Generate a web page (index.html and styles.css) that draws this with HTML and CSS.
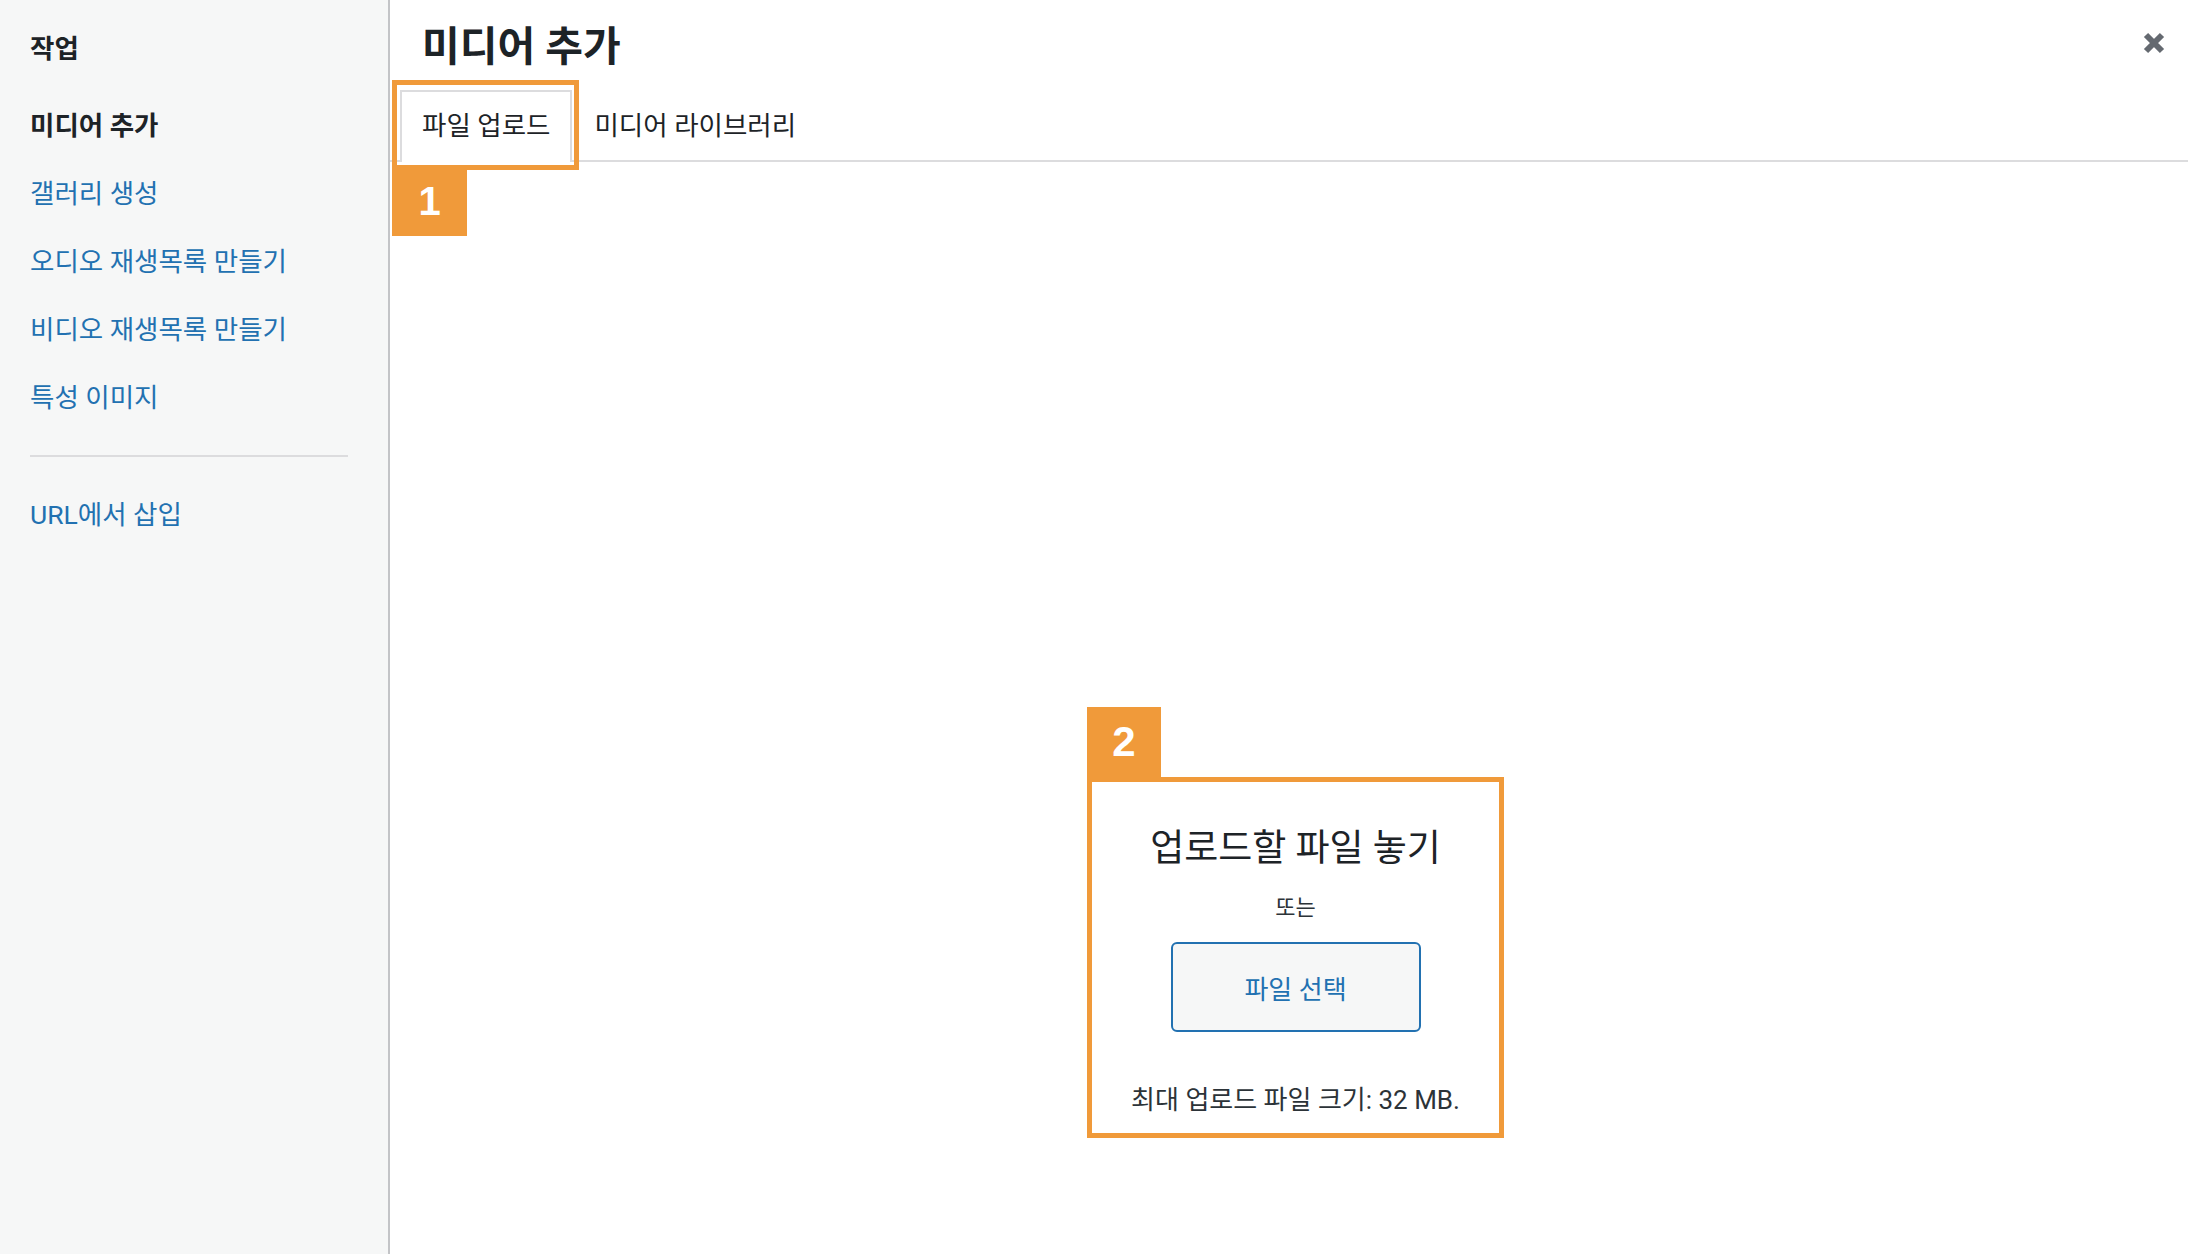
FILE: index.html
```html
<!DOCTYPE html>
<html lang="ko">
<head>
    <meta charset="UTF-8">
    <meta name="viewport" content="width=device-width, initial-scale=1.0">
    <title>미디어 추가</title>
    <link rel="stylesheet" href="styles.css">
</head>
<body>

    <div class="media-modal">

        <!-- Left menu -->
        <aside class="menu">
            <h2 class="menu-heading">작업</h2>
            <a class="menu-item active" href="#">미디어 추가</a>
            <a class="menu-item" href="#">갤러리 생성</a>
            <a class="menu-item" href="#">오디오 재생목록 만들기</a>
            <a class="menu-item" href="#">비디오 재생목록 만들기</a>
            <a class="menu-item" href="#">특성 이미지</a>
            <div class="separator"></div>
            <a class="menu-item" href="#">URL에서 삽입</a>
        </aside>

        <!-- Main frame -->
        <main class="frame">
            <header class="frame-title">
                <h1>미디어 추가</h1>
                <button class="close-btn" aria-label="닫기">
                    <svg width="22" height="22" viewBox="0 0 22 22">
                        <path d="M3 3 L19 19 M19 3 L3 19" stroke="#646970" stroke-width="6" fill="none"/>
                    </svg>
                </button>
            </header>

            <nav class="router">
                <a class="tab active" href="#">파일 업로드
                    <span class="mark-frame"></span>
                    <span class="mark-badge">1</span>
                </a>
                <a class="tab" href="#">미디어 라이브러리</a>
            </nav>

            <section class="uploader">
                <div class="drop-wrap">
                    <div class="mark-tag">2</div>
                    <div class="drop-zone">
                        <h2 class="drop-title">업로드할 파일 놓기</h2>
                        <p class="drop-or">또는</p>
                        <button class="select-btn">파일 선택</button>
                        <p class="max-size">최대 업로드 파일 크기: 32 MB.</p>
                    </div>
                </div>
            </section>
        </main>

    </div>

</body>
</html>
```

FILE: styles.css
```css
/* General */
body {
    margin: 0;
    font-family: Roboto, "Noto Sans CJK KR", sans-serif;
    color: #1d2327;
    background: #fff;
}

.media-modal {
    display: flex;
    height: 100vh;
}

/* Left menu */
.menu {
    width: 358px;
    padding: 15px 0 0 30px;
    background: #f6f7f7;
    border-right: 2px solid #c3c4c7;
}

.menu-heading {
    margin: 0 0 9px;
    font-size: 26.5px;
    line-height: 68px;
    font-weight: 700;
}

.menu-item {
    display: block;
    font-size: 26.5px;
    line-height: 68px;
    color: #2271b1;
    text-decoration: none;
}

.menu-item.active {
    color: #1d2327;
    font-weight: 700;
}

.separator {
    height: 2px;
    margin: 23px 40px 24px 0;
    background: #dcdcde;
}

/* Main frame */
.frame {
    flex: 1;
    display: flex;
    flex-direction: column;
}

.frame-title {
    display: flex;
    justify-content: space-between;
    align-items: center;
    height: 86px;
}

.frame-title h1 {
    margin: 0;
    padding-left: 32px;
    font-size: 41px;
    font-weight: 700;
}

.close-btn {
    margin-right: 23px;
    padding: 0;
    width: 22px;
    height: 22px;
    border: none;
    background: none;
    cursor: pointer;
}

.close-btn svg {
    display: block;
}

/* Tabs */
.router {
    display: flex;
    margin-top: 4px;
    padding-left: 10px;
    border-bottom: 2px solid #dcdcde;
}

.tab {
    position: relative;
    display: block;
    padding: 0 20px;
    font-size: 26.5px;
    line-height: 68px;
    color: #1d2327;
    text-decoration: none;
    border: 2px solid transparent;
    border-bottom: none;
}

.tab.active {
    background: #fff;
    border-color: #dcdcde;
    margin-bottom: -2px;
    padding-bottom: 2px;
}

/* Orange callouts */
.mark-frame {
    position: absolute;
    left: -10px;
    top: -12px;
    right: -9px;
    bottom: -8px;
    border: 5px solid #f09a3a;
    pointer-events: none;
}

.mark-badge,
.mark-tag {
    display: flex;
    align-items: center;
    justify-content: center;
    background: #f09a3a;
    color: #fff;
    font-family: "Liberation Sans", Arial, sans-serif;
    font-weight: 700;
}

.mark-badge {
    position: absolute;
    left: -10px;
    top: 73px;
    width: 75px;
    height: 71px;
    font-size: 40px;
    line-height: 1;
}

/* Uploader */
.uploader {
    flex: 1;
    display: flex;
    justify-content: center;
    padding: 545px 0 0 13px;
}

.drop-wrap {
    display: flex;
    flex-direction: column;
    align-items: flex-start;
}

.mark-tag {
    width: 74px;
    height: 70px;
    font-size: 42px;
}

.drop-zone {
    box-sizing: border-box;
    width: 417px;
    padding: 42px 0 15px;
    border: 5px solid #f09a3a;
    display: flex;
    flex-direction: column;
    align-items: center;
    text-align: center;
}

.drop-title {
    margin: 0;
    font-size: 37px;
    line-height: 50px;
    font-weight: 400;
}

.drop-or {
    margin: 19px 0 0;
    font-size: 22px;
    line-height: 30px;
    color: #2c3338;
}

.select-btn {
    margin-top: 19px;
    width: 250px;
    height: 90px;
    border: 2px solid #2271b1;
    border-radius: 6px;
    background: #f6f7f7;
    color: #2271b1;
    font-family: inherit;
    font-size: 26px;
    cursor: pointer;
}

.max-size {
    margin: 50px 0 0;
    font-size: 26px;
    line-height: 36px;
    color: #2c3338;
}
```
